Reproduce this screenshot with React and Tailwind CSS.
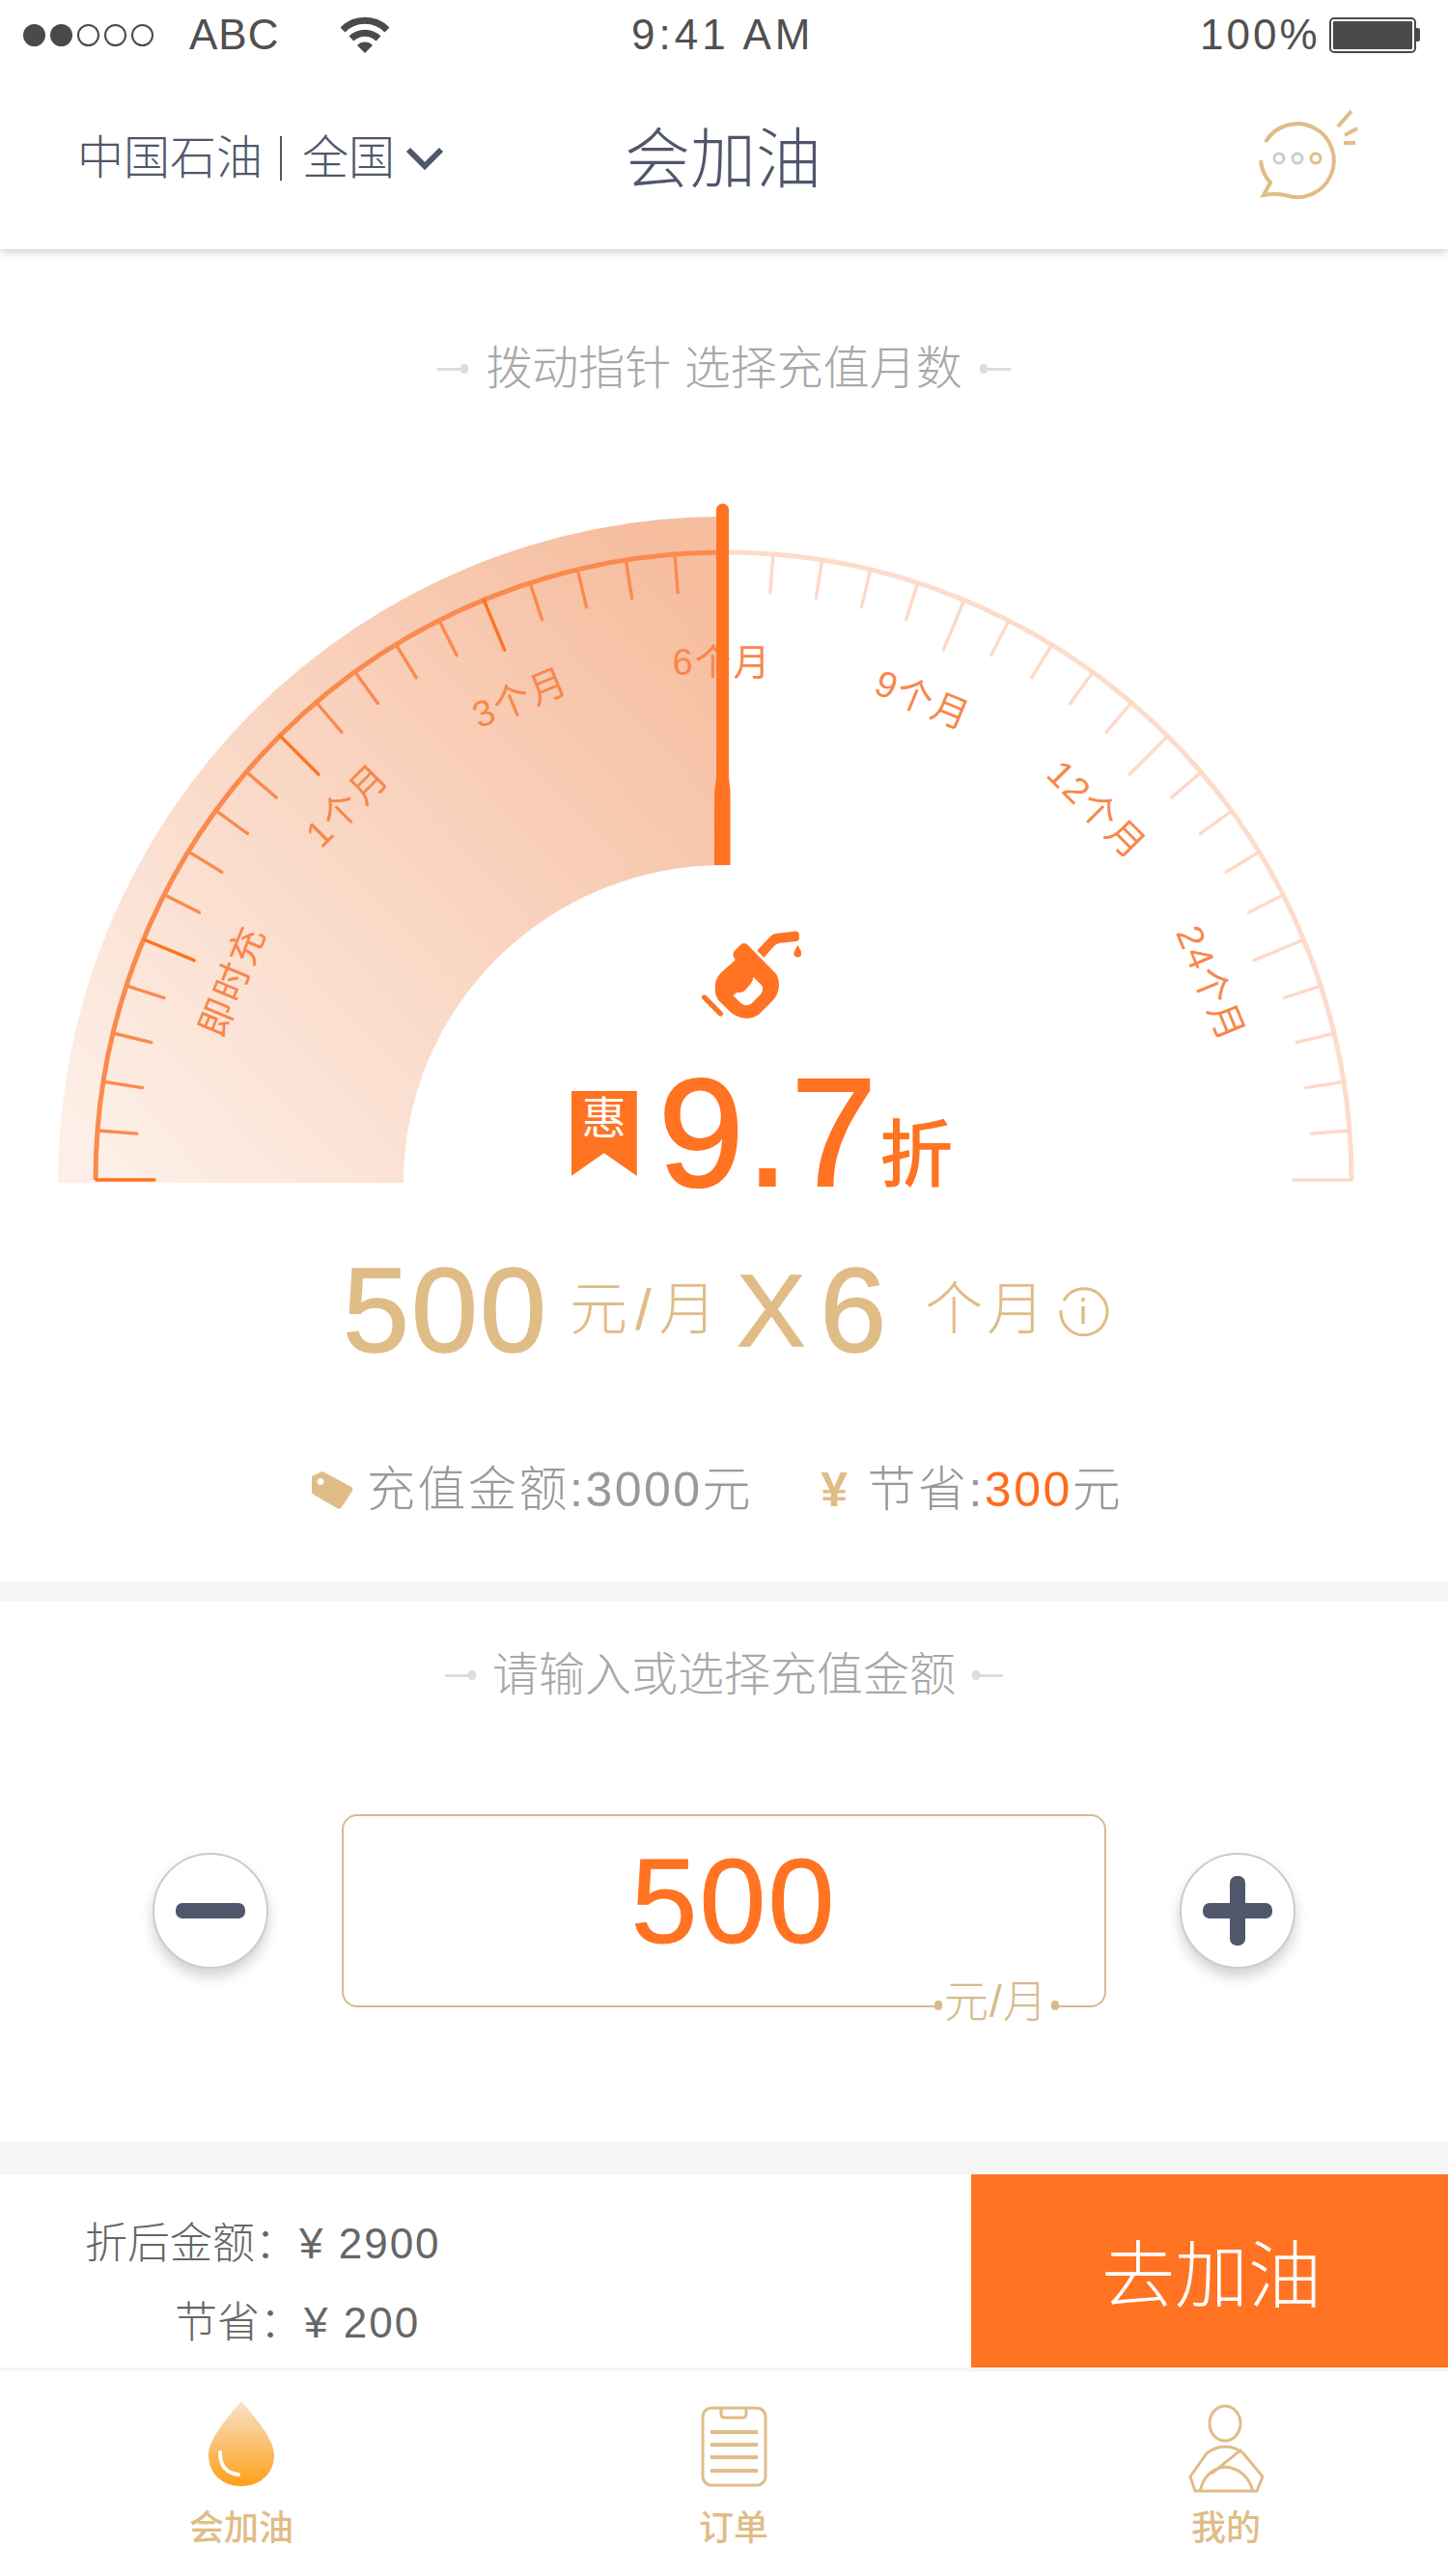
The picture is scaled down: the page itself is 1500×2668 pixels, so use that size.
import React from "react";

const ticks = Array.from({ length: 41 }, (_, i) => i);

const polar = (deg, r) => {
  const a = (deg * Math.PI) / 180;
  return [750 - r * Math.cos(a), 1222 - r * Math.sin(a)];
};

const labels = [
  { text: "即时充", x: 241, y: 1016, rot: -67.5 },
  { text: "1个月", x: 360, y: 834, rot: -45 },
  { text: "3个月", x: 539, y: 723, rot: -22.5 },
  { text: "6个月", x: 748, y: 686, rot: 0 },
  { text: "9个月", x: 956, y: 725, rot: 22.5 },
  { text: "12个月", x: 1136, y: 839, rot: 45 },
  { text: "24个月", x: 1254, y: 1019, rot: 67.5 },
];

const Gauge = () => (
  <svg className="absolute inset-0" width="1500" height="730" viewBox="0 510 1500 730">
    <defs>
      <linearGradient id="band" gradientUnits="userSpaceOnUse" x1="130" y1="1225" x2="750" y2="640">
        <stop offset="0" stopColor="#fdefe7" />
        <stop offset="1" stopColor="#f6bd9f" />
      </linearGradient>
    </defs>
    <path d="M60 1225A690 690 0 0 1 750 535V896A332 329 0 0 0 418 1225Z" fill="url(#band)" />
    <path d="M750 572A650 650 0 0 1 1400 1222" fill="none" stroke="#fddccb" strokeWidth="5" />
    <path d="M99 1222A651 650 0 0 1 750 572" fill="none" stroke="#fa8a4e" strokeWidth="5" />
    {ticks.map((i) => {
      if (i === 20) return null;
      const major = i % 5 === 0;
      const edge = i === 0 || i === 40;
      const [x1, y1] = polar(i * 4.5, 650);
      const [x2, y2] = polar(i * 4.5, edge ? 590 : major ? 594 : 610);
      const left = i < 20;
      const color = left ? (major ? "#ff7322" : "#fa8a4e") : "#fdd9c6";
      return (
        <line key={i} x1={x1} y1={y1} x2={x2} y2={y2} stroke={color} strokeWidth="3.4" strokeLinecap="round" />
      );
    })}
    {labels.map((l) => (
      <text
        key={l.text}
        transform={`translate(${l.x} ${l.y}) rotate(${l.rot})`}
        textAnchor="middle"
        dominantBaseline="central"
        fill="#f8874b"
        fontSize="38"
        letterSpacing="2"
      >
        {l.text}
      </text>
    ))}
    <path d="M742 528a6.5 6.5 0 0 1 13 0V805L756.500 820V896H740V820L742 805Z" fill="#ff7322" />
  </svg>
);

const FuelIcon = () => (
  <svg width="104" height="94" viewBox="-28 948 216 196" className="ml-[56px]">
    <path
      fillRule="evenodd"
      fill="#ff7322"
      d="M58 982Q65 977 72 982L132 1043Q142 1055 140 1075Q138 1090 128 1102L98 1132Q70 1152 38 1130L12 1105Q-2 1090 4 1060Q8 1050 15 1043L46 1015Q38 1005 44 996ZM85 1052L103 1070Q108 1078 102 1088L80 1110Q70 1116 60 1110L41 1092L50 1085Q60 1087 66 1082L80 1066Q84 1060 85 1052Z"
    />
    <path
      fill="#ff7322"
      d="M93 995L122 964Q128 958 136 958L176 953Q184 953 184 960V970Q183 975 176 975L142 979Q134 980 128 987L108 1010Z"
    />
    <path fill="#ff7322" d="M181 983L189 998A8.500 8.500 0 1 1 173 998Z" />
    <path d="M-21 1096L14 1131" stroke="#ff7322" strokeWidth="11" strokeLinecap="round" />
  </svg>
);

const Tip = ({ children, gap }) => (
  <div className={`flex items-center justify-center ${gap}`}>
    <div className="flex items-center">
      <div className="w-[24px] h-[3px] bg-[#dddddd]" />
      <div className="w-[8px] h-[10px] rounded-full bg-[#dddddd]" />
    </div>
    <span className="text-[48px] leading-[60px] font-light text-[#a8a8a8]">{children}</span>
    <div className="flex items-center">
      <div className="w-[8px] h-[10px] rounded-full bg-[#dddddd]" />
      <div className="w-[24px] h-[3px] bg-[#dddddd]" />
    </div>
  </div>
);

const StatusBar = () => (
  <div className="h-[72px] flex items-center text-[#505050] text-[44px] font-light relative z-10 bg-white">
    <div className="flex items-center gap-[5px] ml-[24px]">
      <div className="w-[23px] h-[23px] rounded-full bg-[#4a4a4a]" />
      <div className="w-[23px] h-[23px] rounded-full bg-[#4a4a4a]" />
      <div className="w-[23px] h-[23px] rounded-full border-2 border-[#4a4a4a]" />
      <div className="w-[23px] h-[23px] rounded-full border-2 border-[#4a4a4a]" />
      <div className="w-[23px] h-[23px] rounded-full border-2 border-[#4a4a4a]" />
    </div>
    <span className="ml-[37px] w-[90px] tracking-[1px]">ABC</span>
    <svg width="50" height="40" viewBox="352 14 50 40" className="ml-[67px]">
      <path d="M354 29A32 32 0 0 1 400 29" fill="none" stroke="#4a4a4a" strokeWidth="7" />
      <path d="M363 38A20 20 0 0 1 391 38" fill="none" stroke="#4a4a4a" strokeWidth="7" />
      <path d="M369 45A11 11 0 0 1 385 45L377 53Z" fill="#4a4a4a" />
    </svg>
    <span className="ml-[251px] w-[190px] whitespace-nowrap tracking-[4px]">9:41 AM</span>
    <span className="ml-[399px] whitespace-nowrap tracking-[3px]">100%</span>
    <div className="ml-[9px] w-[90px] h-[37px] rounded-[5px] border-2 border-[#4a4a4a] p-[2px]">
      <div className="w-full h-full bg-[#4a4a4a] rounded-[1px]" />
    </div>
    <div className="w-[4px] h-[14px] bg-[#4a4a4a] rounded-r-[2px]" />
  </div>
);

const NavBar = () => (
  <div className="h-[186px] relative bg-white shadow-[0_4px_8px_rgba(0,0,0,0.16)] flex items-center text-[#50576b]">
    <div className="ml-[80px] w-[567px] flex items-center text-[48px] mt-[-2px] font-light whitespace-nowrap">
      <span>中国石油</span>
      <div className="w-[2px] h-[46px] bg-[#50576b] ml-[18px] mr-[21px]" />
      <span>全国</span>
      <svg width="40" height="26" viewBox="0 0 40 26" className="ml-[11px]">
        <path d="M3 4L20 21L37 4" fill="none" stroke="#50576b" strokeWidth="6" />
      </svg>
    </div>
    <span className="text-[68px] w-[204px] whitespace-nowrap font-light">会加油</span>
    <svg width="110" height="100" viewBox="1300 110 110 100" className="ml-[449px] mb-[8px]">
      <path
        d="M1311 146A38 38 0 1 1 1331 201Q1320 199 1309 201L1316 188A38 38 0 0 1 1306 165"
        fill="none"
        stroke="#e0bc87"
        strokeWidth="4"
      />
      <circle cx="1325" cy="163" r="5" fill="none" stroke="#cccccc" strokeWidth="3" />
      <circle cx="1344" cy="163" r="5" fill="none" stroke="#cccccc" strokeWidth="3" />
      <circle cx="1363" cy="163" r="5" fill="none" stroke="#e0bc87" strokeWidth="3" />
      <path d="M1400 114L1386 130M1406 132L1393 139M1392 147H1404" stroke="#e0bc87" strokeWidth="4" fill="none" />
    </svg>
  </div>
);

const Stepper = ({ plus }) => (
  <div className="w-[120px] h-[120px] rounded-full bg-white border-2 border-[#cccccc] shadow-[0_8px_14px_rgba(0,0,0,0.18)] relative flex items-center justify-center">
    <div className="w-[72px] h-[16px] rounded-[7px] bg-[#50576b]" />
    {plus && <div className="absolute w-[16px] h-[72px] rounded-[7px] bg-[#50576b]" />}
  </div>
);

const Tab = ({ label, ml, children }) => (
  <div className={`w-[120px] flex flex-col items-center ${ml}`}>
    <div className="h-[98px] flex items-end justify-center">{children}</div>
    <span className="mt-[11px] text-[36px] leading-[44px] font-medium text-[#e0bc87]">{label}</span>
  </div>
);

export default function App() {
  return (
    <div className="w-[1500px] h-[2668px] bg-white overflow-hidden font-['Liberation_Sans','Noto_Sans_CJK_SC',sans-serif]">
      <StatusBar />
      <NavBar />

      <section className="h-[1380px] flex flex-col">
        <div className="mt-[94px]">
          <Tip gap="gap-[18px]">拨动指针 选择充值月数</Tip>
        </div>

        <div className="relative h-[730px] mt-[98px]">
          <Gauge />
          <div className="relative flex flex-col items-center pt-[452px]">
            <FuelIcon />
            <div className="flex items-end h-[130px] mt-[56px] ml-[80px]">
              <div className="relative w-[68px] h-[88px] mb-[24px] ml-[3px] bg-[#ff7322] [clip-path:polygon(0_0,100%_0,100%_100%,50%_73%,0_100%)] flex justify-center">
                <span className="text-[46px] leading-[56px] text-white">惠</span>
              </div>
              <span className="ml-[22px] text-[160px] leading-[160px] tracking-[2px] text-[#ff7322] [-webkit-text-stroke:2px_#ff7322] whitespace-nowrap mb-[-11px]">9.7</span>
              <span className="ml-[1px] mr-[4px] text-[76px] leading-[90px] font-medium text-[#ff7322]">折</span>
            </div>
          </div>
        </div>

        <div className="flex items-center text-[#e0bc87] mt-[57px] ml-[355px] h-[120px] whitespace-nowrap">
          <span className="text-[124px] leading-none tracking-[2px] [-webkit-text-stroke:1.5px_#e0bc87]">500</span>
          <span className="ml-[22px] text-[60px] font-light tracking-[8px]">元/月</span>
          <span className="ml-[13px] text-[106px] leading-none [-webkit-text-stroke:1.5px_#e0bc87]">X</span>
          <span className="ml-[15px] text-[124px] leading-none [-webkit-text-stroke:1.5px_#e0bc87]">6</span>
          <span className="ml-[40px] text-[60px] font-light tracking-[4px]">个月</span>
          <svg width="54" height="54" viewBox="0 0 54 54" className="ml-[9px]">
            <path d="M7 17A24 24 0 1 1 4 27" fill="none" stroke="#e0bc87" strokeWidth="3" />
            <path d="M27 14V18M27 23V41" stroke="#e0bc87" strokeWidth="3.500" />
          </svg>
        </div>

        <div className="flex items-center mt-[94px] ml-[320px] h-[64px] text-[50px] tracking-[2.5px] text-[#999999] whitespace-nowrap font-light">
          <svg width="46" height="42" viewBox="320 1522 46 42">
            <path
              fillRule="evenodd"
              fill="#e0bc87"
              d="M323 1529L334 1524L364 1540Q366 1542 365 1544L354 1561Q352 1564 349 1562L325 1548Q323 1547 323 1545ZM332 1531A3.500 3.500 0 1 0 332.100 1531Z"
            />
          </svg>
          <span className="ml-[14px]">充值金额:3000元</span>
          <span className="ml-[70px] text-[50px] leading-none font-bold text-[#e0bc87]">¥</span>
          <span className="ml-[18px]">节省:</span>
          <span className="text-[#ff6b1a]">300</span>
          <span>元</span>
        </div>
      </section>

      <div className="h-[20px] bg-[#f5f5f5]" />

      <section className="h-[560px] flex flex-col">
        <div className="mt-[47px]">
          <Tip gap="gap-[17px]">请输入或选择充值金额</Tip>
        </div>
        <div className="flex items-center ml-[158px] mt-[114px]">
          <Stepper />
          <div className="relative ml-[76px] mr-[76px] w-[792px] h-[200px] rounded-[16px] border-2 border-[#d6bb90] flex items-center justify-center">
            <span className="ml-[20px] mb-[20px] text-[124px] leading-none tracking-[2px] text-[#ff7322] [-webkit-text-stroke:1px_#ff7322]">500</span>
            <div className="absolute left-[612px] bottom-[-20px] bg-white flex items-center h-[40px] text-[46px] font-light tracking-[1px] text-[#d6bb90] whitespace-nowrap">
              <div className="w-[8px] h-[10px] rounded-full bg-[#d6bb90]" />
              <span className="ml-[2px] mr-[3px] mb-[8px] leading-[40px]">元/月</span>
              <div className="w-[8px] h-[10px] rounded-full bg-[#d6bb90]" />
            </div>
          </div>
          <Stepper plus />
        </div>
      </section>

      <div className="h-[34px] bg-[#f5f5f5]" />

      <div className="h-[200px] flex">
        <div className="flex-1 flex flex-col text-[44px] text-[#666666] font-light whitespace-nowrap">
          <div className="ml-[88px] mt-[44px] h-[56px] flex items-center">
            <span>折后金额：</span>
            <span className="ml-[2px] tracking-[2px]">¥ 2900</span>
          </div>
          <div className="ml-[181px] mt-[26px] h-[56px] flex items-center">
            <span>节省：</span>
            <span className="ml-[2px] tracking-[2px]">¥ 200</span>
          </div>
        </div>
        <div className="w-[494px] bg-[#ff7322] flex items-center justify-center text-[76px] font-light text-white">
          <span className="ml-[4px] mt-[12px]">去加油</span>
        </div>
      </div>

      <div className="h-[4px] bg-[#f5f5f5]" />

      <div className="flex pt-[32px]">
        <Tab label="会加油" ml="ml-[190px]">
          <svg width="70" height="90" viewBox="215 2487 70 90" className="mb-[10px]">
            <defs>
              <linearGradient id="drop" x1="0" y1="0" x2="0" y2="1">
                <stop offset="0" stopColor="#f6e3cc" />
                <stop offset="1" stopColor="#ff9f17" />
              </linearGradient>
            </defs>
            <path
              d="M250 2488C258 2498 284 2525 284 2544C284 2563 269 2576 250 2576C231 2576 216 2563 216 2544C216 2525 242 2498 250 2488Z"
              fill="url(#drop)"
            />
            <path d="M228 2541C228 2553 232 2562 247 2564" fill="none" stroke="#ffffff" strokeWidth="4" strokeLinecap="round" />
          </svg>
        </Tab>
        <Tab label="订单" ml="ml-[390px]">
          <svg width="70" height="84" viewBox="725 2493 70 84" className="mb-[10px]">
            <rect x="728" y="2495" width="65" height="80" rx="9" fill="none" stroke="#e0bc87" strokeWidth="3" />
            <path d="M747 2495V2501Q747 2505 751 2505H769Q773 2505 773 2501V2495" fill="none" stroke="#e0bc87" strokeWidth="3" />
            <path d="M736 2520H785M736 2533H785M736 2546H785M736 2560H785" stroke="#e0bc87" strokeWidth="4" />
          </svg>
        </Tab>
        <Tab label="我的" ml="ml-[390px]">
          <svg width="80" height="92" viewBox="1231 2491 80 92" className="mb-[4px]">
            <ellipse cx="1270" cy="2511" rx="16" ry="18" fill="none" stroke="#e0bc87" strokeWidth="3" />
            <path
              d="M1234 2566L1251 2542Q1260 2535 1270 2535Q1280 2535 1289 2542L1309 2566L1303 2581H1239Z"
              fill="none"
              stroke="#e0bc87"
              strokeWidth="3"
            />
            <path d="M1244 2581Q1250 2558 1270 2556Q1292 2558 1299 2581M1287 2538L1256 2563" fill="none" stroke="#e0bc87" strokeWidth="3" />
          </svg>
        </Tab>
      </div>
    </div>
  );
}
